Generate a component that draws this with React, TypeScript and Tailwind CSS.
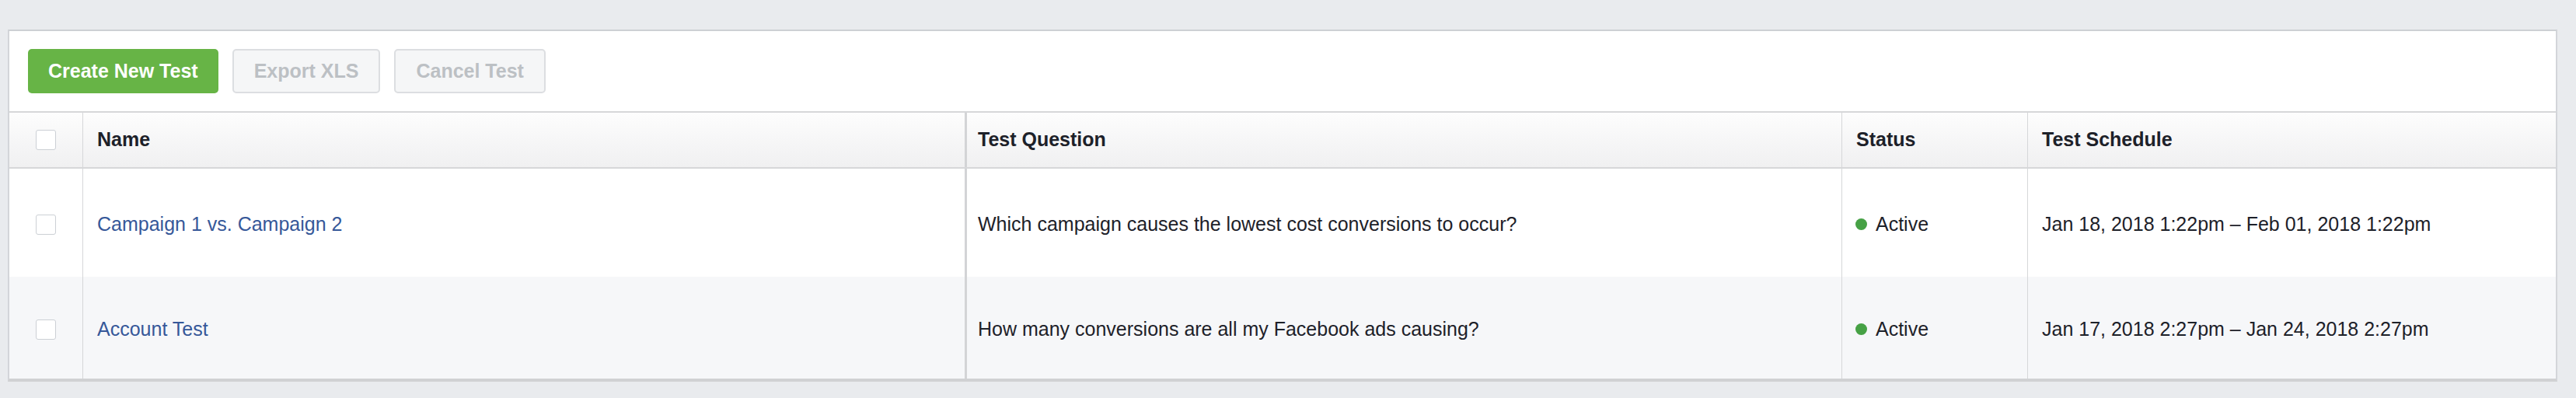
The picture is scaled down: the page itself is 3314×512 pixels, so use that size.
import React from 'react'

interface TestRow {
  name: string
  question: string
  status: string
  schedule: string
}

const rows: TestRow[] = [
  {
    name: 'Campaign 1 vs. Campaign 2',
    question: 'Which campaign causes the lowest cost conversions to occur?',
    status: 'Active',
    schedule: 'Jan 18, 2018 1:22pm – Feb 01, 2018 1:22pm',
  },
  {
    name: 'Account Test',
    question: 'How many conversions are all my Facebook ads causing?',
    status: 'Active',
    schedule: 'Jan 17, 2018 2:27pm – Jan 24, 2018 2:27pm',
  },
]

const cols = 'grid grid-cols-[95px_1137px_1126px_239px_1fr]'

function Checkbox() {
  return <div className="h-[26px] w-[26px] rounded-[3px] border border-[#ccd0d5] bg-white" />
}

export default function App() {
  return (
    <div
      className="h-[512px] w-[3314px] bg-[#e9ebee] pt-[38px] pl-[10px] text-[25px] text-[#1d2129]"
      style={{ fontFamily: '"Liberation Sans", Arial, sans-serif' }}
    >
      <div className="w-[3280px] border-x-2 border-t-2 border-b-4 border-x-[#d3d5d9] border-t-[#cdd0d4] border-b-[#d0d1d3] bg-white">
        {/* toolbar */}
        <div className="flex h-[105px] items-center gap-[18px] border-b-2 border-[#d6d7d9] pl-[24px]">
          <button className="h-[57px] rounded-[5px] bg-[#67b446] px-[26px] font-bold text-white">
            Create New Test
          </button>
          <button className="h-[57px] rounded-[5px] border-2 border-[#dcdee1] bg-[#f5f6f7] px-[26px] font-bold text-[#bcc0c4]">
            Export XLS
          </button>
          <button className="h-[57px] rounded-[5px] border-2 border-[#dcdee1] bg-[#f5f6f7] px-[26px] font-bold text-[#bcc0c4]">
            Cancel Test
          </button>
        </div>

        {/* header */}
        <div className={`${cols} h-[72px] border-b-2 border-[#d6d7d9] bg-gradient-to-b from-[#fdfdfd] to-[#f0f0f1] font-bold`}>
          <div className="flex items-center justify-center border-r border-[#d6d7d9]">
            <Checkbox />
          </div>
          <div className="flex items-center border-r-[3px] border-[#d3d4d6] pl-[18px]">Name</div>
          <div className="flex items-center border-r border-[#d6d7d9] pl-[14px]">Test Question</div>
          <div className="flex items-center border-r border-[#d6d7d9] pl-[18px]">Status</div>
          <div className="flex items-center pl-[18px]">Test Schedule</div>
        </div>

        {/* rows */}
        {rows.map((row, index) => (
          <div
            key={row.name}
            className={`${cols} ${index === 0 ? 'h-[139px] bg-white' : 'h-[131px] bg-[#f6f7f9]'}`}
          >
            <div className="flex items-center justify-center border-r border-[#d6d7d9] pt-[4px]">
              <Checkbox />
            </div>
            <div className="flex items-center border-r-[3px] border-[#d3d4d6] pl-[18px] pt-[4px] text-[#365899]">
              {row.name}
            </div>
            <div className="flex items-center border-r border-[#d6d7d9] pl-[14px] pt-[4px]">{row.question}</div>
            <div className="flex items-center gap-[11px] border-r border-[#d6d7d9] pl-[17px] pt-[4px]">
              <span className="h-[15px] w-[15px] rounded-full bg-[#46a145]" />
              {row.status}
            </div>
            <div className="flex items-center pl-[18px] pt-[4px]">{row.schedule}</div>
          </div>
        ))}
      </div>
    </div>
  )
}
